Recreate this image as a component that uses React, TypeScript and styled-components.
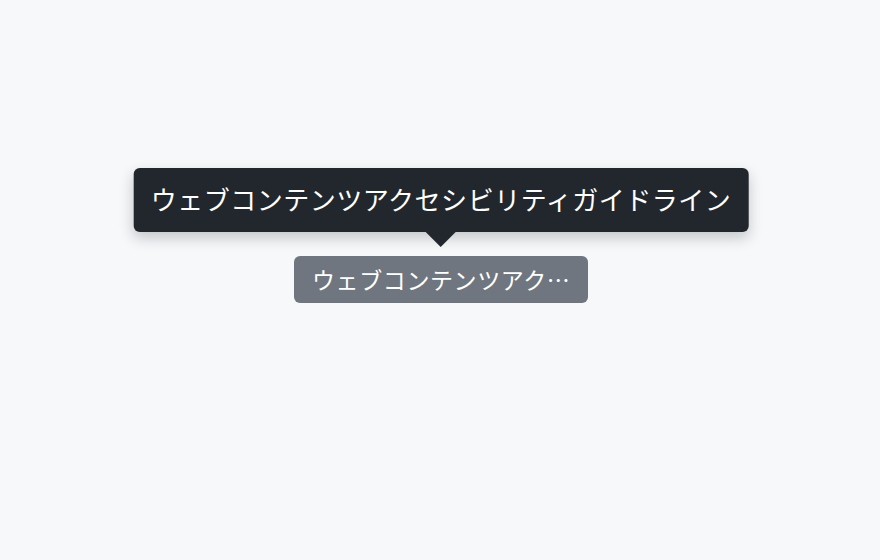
import React from "react";
import styled, { createGlobalStyle } from "styled-components";

const Global = createGlobalStyle`
  html, body { margin: 0; padding: 0; }
  body {
    background: #f7f8fa;
    font-family: "Noto Sans CJK JP", "Noto Sans", sans-serif;
  }
`;

const Page = styled.main`
  width: 880px;
  height: 559px;
  display: flex;
  align-items: center;
  justify-content: center;
`;

const Anchor = styled.div`
  position: relative;
  display: flex;
  justify-content: center;
  margin-left: 2px;
`;

const Chip = styled.span`
  display: block;
  box-sizing: border-box;
  width: 294px;
  padding: 8px 17px 8px 18px;
  background: #6f7680;
  color: #ffffff;
  border-radius: 6px;
  font-size: 23px;
  letter-spacing: 0.6px;
  line-height: 31px;
  white-space: nowrap;
  overflow: hidden;
  text-overflow: ellipsis;
`;

const Tooltip = styled.div`
  position: absolute;
  bottom: calc(100% + 24px);
  left: 50%;
  transform: translateX(-50%);
  padding: 15px 17px 17px;
  background: #22272e;
  color: #ffffff;
  border-radius: 6px;
  font-size: 26px;
  letter-spacing: 0.52px;
  line-height: 32px;
  white-space: nowrap;
  box-shadow: 0 6px 14px rgba(20, 24, 32, 0.22);

  &::after {
    content: "";
    position: absolute;
    top: 100%;
    left: 50%;
    transform: translateX(-50%);
    border-left: 15px solid transparent;
    border-right: 15px solid transparent;
    border-top: 15px solid #22272e;
  }
`;

const label = "ウェブコンテンツアクセシビリティガイドライン";

export default function App() {
  return (
    <>
      <Global />
      <Page>
        <Anchor>
          <Tooltip role="tooltip">{label}</Tooltip>
          <Chip>{label}</Chip>
        </Anchor>
      </Page>
    </>
  );
}
